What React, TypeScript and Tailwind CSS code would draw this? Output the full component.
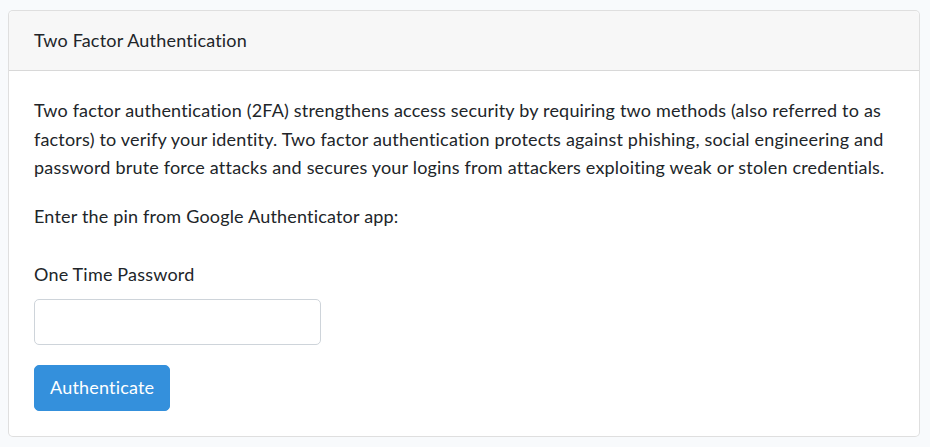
import React from "react";

export default function App() {
  return (
    <div className="min-h-[447px] bg-[#f8fafc] pt-[10px] px-[10px] pl-[8px] pb-[9px] font-['Lato','Noto_Sans',sans-serif] text-[18px] leading-[28.8px] tracking-[0.19px] text-[#212529]">
      <div className="rounded-[5px] border border-[rgba(0,0,0,0.125)] bg-white">
        <div className="rounded-t-[5px] border-b border-[rgba(0,0,0,0.125)] bg-[rgba(0,0,0,0.03)] px-[25px] py-[15px]">
          Two Factor Authentication
        </div>
        <div className="p-[25px]">
          <p className="mb-[20px]">
            Two factor authentication (2FA) strengthens access security by requiring two methods (also referred to as
            <br />
            factors) to verify your identity. Two factor authentication protects against phishing, social engineering and
            <br />
            password brute force attacks and secures your logins from attackers exploiting weak or stolen credentials.
          </p>
          <p className="mb-[29px]">Enter the pin from Google Authenticator app:</p>
          <form onSubmit={(e) => e.preventDefault()}>
            <div className="mb-[20px]">
              <label className="mb-[10px] block">One Time Password</label>
              <input
                type="password"
                className="block h-[46px] w-[287px] rounded-[5px] border border-[#ced4da] bg-white px-[15px] outline-none"
              />
            </div>
            <button
              type="submit"
              className="h-[46px] rounded-[5px] border border-[#3490dc] bg-[#3490dc] px-[15px] text-white"
            >
              Authenticate
            </button>
          </form>
        </div>
      </div>
    </div>
  );
}
